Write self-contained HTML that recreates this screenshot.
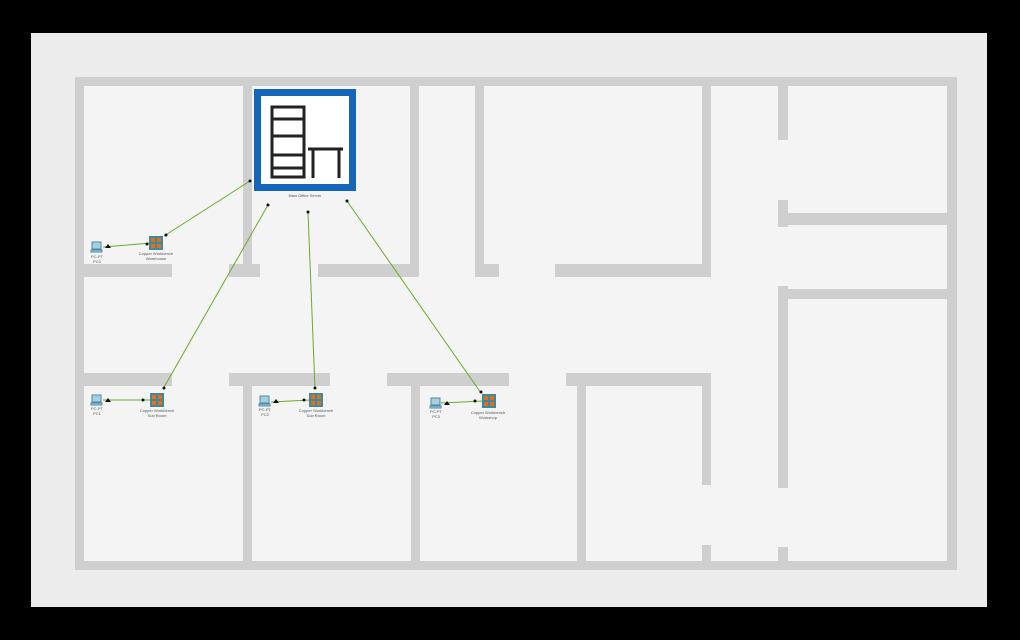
<!DOCTYPE html>
<html><head><meta charset="utf-8"><style>
body{margin:0;width:1020px;height:640px;background:#000;position:relative;overflow:hidden;font-family:"Liberation Sans",sans-serif}
.w{position:absolute;background:#cfcfcf}
.a{position:absolute}
.lbl{position:absolute;font-size:4px;color:#555;text-align:center;line-height:5px;width:40px}
</style></head><body>
<div class="a" style="left:31px;top:33px;width:956px;height:574px;background:#ececec"></div>
<div class="a" style="left:75px;top:77px;width:882px;height:493px;background:#f4f4f4"></div>
<div class="w" style="left:75px;top:77px;width:882px;height:9px"></div>
<div class="w" style="left:75px;top:561px;width:882px;height:9px"></div>
<div class="w" style="left:75px;top:77px;width:9px;height:493px"></div>
<div class="w" style="left:947px;top:77px;width:10px;height:493px"></div>
<div class="w" style="left:243px;top:86px;width:9px;height:190px"></div>
<div class="w" style="left:410px;top:86px;width:9px;height:190px"></div>
<div class="w" style="left:475px;top:86px;width:9px;height:190px"></div>
<div class="w" style="left:702px;top:86px;width:9px;height:190px"></div>
<div class="w" style="left:84px;top:264px;width:88px;height:13px"></div>
<div class="w" style="left:229px;top:264px;width:31px;height:13px"></div>
<div class="w" style="left:318px;top:264px;width:100px;height:13px"></div>
<div class="w" style="left:475px;top:264px;width:24px;height:13px"></div>
<div class="w" style="left:555px;top:264px;width:156px;height:13px"></div>
<div class="w" style="left:84px;top:373px;width:88px;height:13px"></div>
<div class="w" style="left:229px;top:373px;width:101px;height:13px"></div>
<div class="w" style="left:387px;top:373px;width:122px;height:13px"></div>
<div class="w" style="left:566px;top:373px;width:145px;height:13px"></div>
<div class="w" style="left:243px;top:373px;width:9px;height:190px"></div>
<div class="w" style="left:411px;top:373px;width:9px;height:190px"></div>
<div class="w" style="left:577px;top:373px;width:9px;height:190px"></div>
<div class="w" style="left:702px;top:373px;width:9px;height:112px"></div>
<div class="w" style="left:702px;top:545px;width:9px;height:18px"></div>
<div class="w" style="left:778px;top:86px;width:10px;height:54px"></div>
<div class="w" style="left:778px;top:200px;width:10px;height:27px"></div>
<div class="w" style="left:778px;top:213px;width:170px;height:12px"></div>
<div class="w" style="left:778px;top:286px;width:10px;height:202px"></div>
<div class="w" style="left:778px;top:289px;width:170px;height:10px"></div>
<div class="w" style="left:778px;top:547px;width:10px;height:16px"></div>

<svg class="a" style="left:0;top:0" width="1020" height="640">
<defs>
<g id="sw">
<rect x="0" y="0" width="14" height="14" fill="#3b8aa0"/>
<rect x="2" y="2" width="4" height="4" fill="#f06a10"/><rect x="8" y="2" width="4" height="4" fill="#f06a10"/>
<rect x="2" y="8" width="4" height="4" fill="#f06a10"/><rect x="8" y="8" width="4" height="4" fill="#f06a10"/>
</g>
<g id="pc" fill="#a8cfe0" stroke="#4a8aa8" stroke-width="1">
<rect x="1" y="0" width="9" height="7"/><rect x="0" y="8" width="11" height="2"/>
</g>
</defs>
<g stroke="#6aab2a" stroke-width="1" fill="none">
<line x1="250" y1="181" x2="164" y2="236"/>
<line x1="268" y1="205" x2="163" y2="389"/>
<line x1="308" y1="212" x2="315" y2="389"/>
<line x1="347" y1="201" x2="481" y2="393"/>
<line x1="103" y1="247" x2="152" y2="243"/>
<line x1="103" y1="400" x2="150" y2="400"/>
<line x1="271" y1="402" x2="310" y2="400"/>
<line x1="441" y1="403" x2="483" y2="401"/>
</g>
<g fill="#111">
<circle cx="250" cy="181" r="1.5"/><circle cx="166" cy="235" r="1.5"/>
<circle cx="268" cy="205" r="1.5"/><circle cx="164" cy="388" r="1.5"/>
<circle cx="308" cy="212" r="1.5"/><circle cx="315" cy="388" r="1.5"/>
<circle cx="347" cy="201" r="1.5"/><circle cx="481" cy="392" r="1.5"/>
<circle cx="147" cy="244" r="1.5"/><circle cx="143" cy="400" r="1.5"/>
<circle cx="304" cy="400" r="1.5"/><circle cx="475" cy="401" r="1.5"/>
<polygon points="108,244 105,248 111,248"/><polygon points="108,398 105,402 111,402"/>
<polygon points="276,399 273,403 279,403"/><polygon points="447,401 444,405 450,405"/>
</g>
<rect x="254" y="89" width="102" height="102" fill="#1565b8"/>
<rect x="261" y="96" width="88" height="88" fill="#fff"/>
<g stroke="#222" stroke-width="3" fill="none">
<rect x="272" y="107" width="32" height="70"/>
<line x1="272" y1="119" x2="304" y2="119"/>
<line x1="272" y1="136" x2="304" y2="136"/>
<line x1="272" y1="155" x2="304" y2="155"/>
<line x1="272" y1="168" x2="304" y2="168"/>
<line x1="308" y1="149" x2="343" y2="149"/>
<line x1="313" y1="149" x2="313" y2="178"/>
<line x1="339" y1="149" x2="339" y2="178"/>
</g>
<use href="#sw" x="149" y="236"/>
<use href="#sw" x="150" y="393"/>
<use href="#sw" x="309" y="393"/>
<use href="#sw" x="482" y="394"/>
<use href="#pc" x="91" y="242"/>
<use href="#pc" x="91" y="395"/>
<use href="#pc" x="259" y="396"/>
<use href="#pc" x="430" y="398"/>
</svg>
<div class="lbl" style="left:285px;top:193px">Main Office Server</div>
<div class="lbl" style="left:77px;top:254px">PC-PT<br>PC0</div>
<div class="lbl" style="left:136px;top:251px">Copper Workbench<br>Warehouse</div>
<div class="lbl" style="left:77px;top:406px">PC-PT<br>PC1</div>
<div class="lbl" style="left:137px;top:408px">Copper Workbench<br>Sub Room</div>
<div class="lbl" style="left:245px;top:407px">PC-PT<br>PC2</div>
<div class="lbl" style="left:296px;top:408px">Copper Workbench<br>Sub Room</div>
<div class="lbl" style="left:416px;top:409px">PC-PT<br>PC3</div>
<div class="lbl" style="left:468px;top:410px">Copper Workbench<br>Workshop</div>
</body></html>
